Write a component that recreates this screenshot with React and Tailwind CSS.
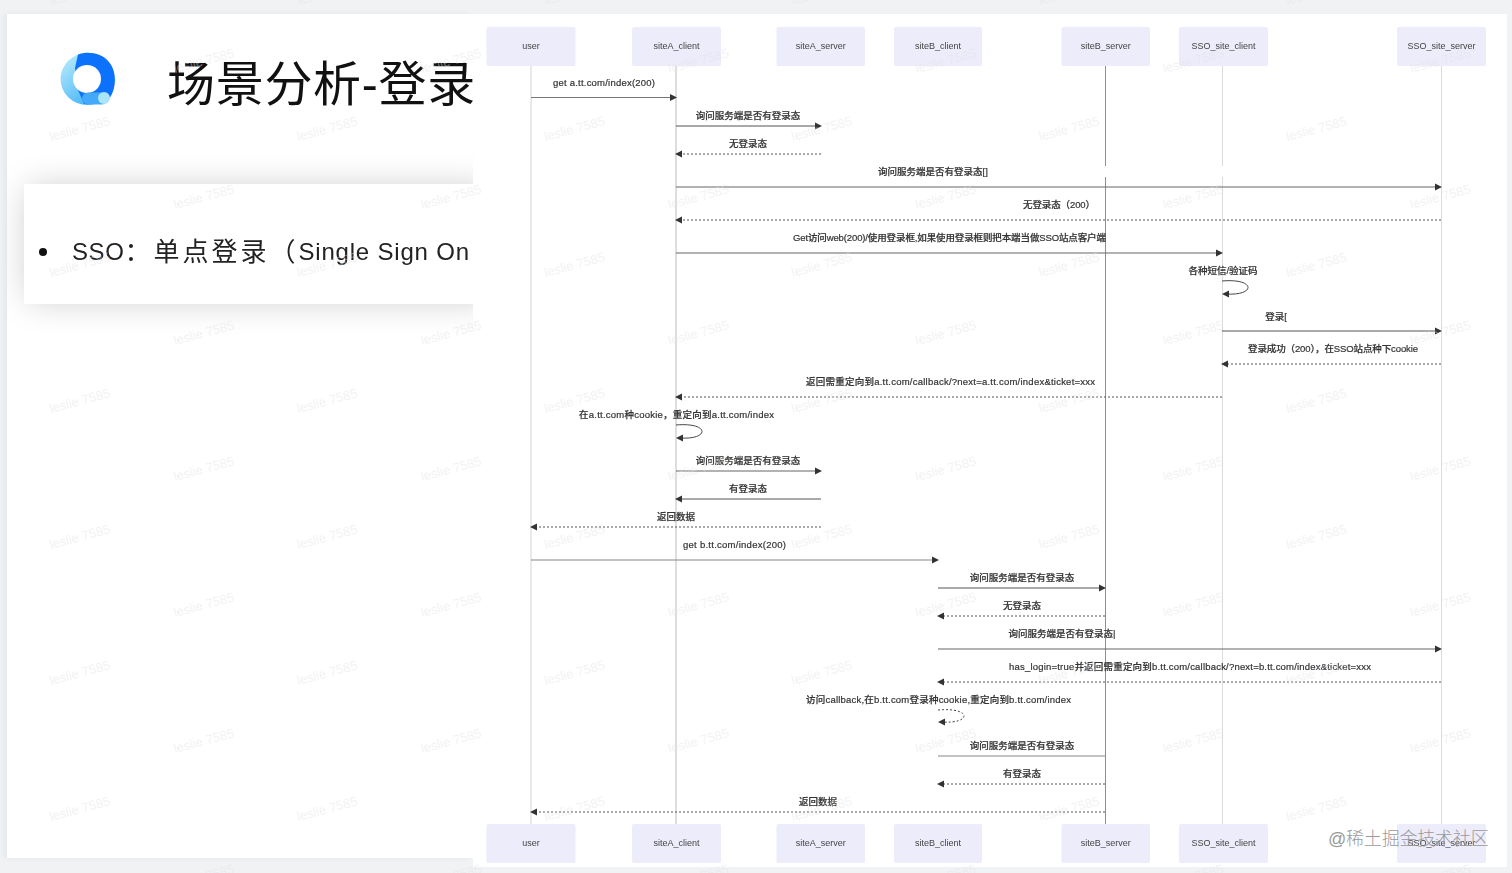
import React from 'react';

const actors = [
  { name: 'user', x: 486.5, w: 89 },
  { name: 'siteA_client', x: 632, w: 89 },
  { name: 'siteA_server', x: 776.5, w: 88.5 },
  { name: 'siteB_client', x: 894, w: 88 },
  { name: 'siteB_server', x: 1061.5, w: 88.5 },
  { name: 'SSO_site_client', x: 1179, w: 89 },
  { name: 'SSO_site_server', x: 1397, w: 89 },
];

const lifelines = [
  { x: 531, color: '#d4d4d4', parts: [[66, 824]] },
  { x: 676, color: '#bdbdbd', parts: [[66, 824]] },
  { x: 1105.5, color: '#8f8f8f', parts: [[66, 166], [177, 824]] },
  { x: 1222.5, color: '#dcdcdc', parts: [[66, 166], [177, 824]] },
  { x: 1441.5, color: '#dcdcdc', parts: [[66, 824]] },
];

const messages = [
  { y: 97.5, from: 531, to: 676, label: 'get a.tt.com/index(200)', lx: 604, ly: 86, w: 102, color: '#777' },
  { y: 126, from: 676, to: 821, label: '询问服务端是否有登录态', lx: 748, ly: 119, color: '#555' },
  { y: 154, from: 821, to: 676, dotted: true, label: '无登录态', lx: 748, ly: 147 },
  { y: 187, from: 676, to: 1441, label: '询问服务端是否有登录态[]', lx: 933, ly: 175, color: '#666' },
  { y: 220, from: 1441, to: 676, dotted: true, label: '无登录态（200）', lx: 1059, ly: 208, w: 72 },
  { y: 253, from: 676, to: 1222, label: 'Get访问web(200)/使用登录框,如果使用登录框则把本端当做SSO站点客户端', lx: 949.5, ly: 241, w: 313, color: '#666' },
  { y: 331, from: 1222, to: 1441, label: '登录[', lx: 1276, ly: 320, color: '#555' },
  { y: 364, from: 1441, to: 1222, dotted: true, label: '登录成功（200），在SSO站点种下cookie', lx: 1333, ly: 352, w: 170 },
  { y: 397, from: 1222, to: 676, dotted: true, label: '返回需重定向到a.tt.com/callback/?next=a.tt.com/index&ticket=xxx', lx: 950.5, ly: 385, w: 289 },
  { y: 471, from: 676, to: 821, label: '询问服务端是否有登录态', lx: 748, ly: 464, color: '#666' },
  { y: 499, from: 821, to: 676, label: '有登录态', lx: 748, ly: 492, color: '#555' },
  { y: 527, from: 821, to: 531, dotted: true, label: '返回数据', lx: 676, ly: 520 },
  { y: 560, from: 531, to: 938, label: 'get b.tt.com/index(200)', lx: 734.5, ly: 548, w: 103, color: '#888' },
  { y: 588, from: 938, to: 1105, label: '询问服务端是否有登录态', lx: 1022, ly: 581, color: '#555' },
  { y: 616, from: 1105, to: 938, dotted: true, label: '无登录态', lx: 1022, ly: 609 },
  { y: 649, from: 938, to: 1441, label: '询问服务端是否有登录态|', lx: 1062, ly: 637, color: '#666' },
  { y: 682, from: 1441, to: 938, dotted: true, label: 'has_login=true并返回需重定向到b.tt.com/callback/?next=b.tt.com/index&ticket=xxx', lx: 1190, ly: 670, w: 362 },
  { y: 756, from: 938, to: 1105, noHead: true, label: '询问服务端是否有登录态', lx: 1022, ly: 749, color: '#888' },
  { y: 784, from: 1105, to: 938, dotted: true, label: '有登录态', lx: 1022, ly: 777 },
  { y: 812, from: 1105, to: 531, dotted: true, label: '返回数据', lx: 818, ly: 805 },
];

const loops = [
  { x: 1222, top: 281, bottom: 294, label: '各种短信/验证码', lx: 1223, ly: 274 },
  { x: 676, top: 425, bottom: 438, label: '在a.tt.com种cookie，重定向到a.tt.com/index', lx: 676.5, ly: 418, w: 195 },
  { x: 938, top: 710, bottom: 722, dotted: true, label: '访问callback,在b.tt.com登录种cookie,重定向到b.tt.com/index', lx: 938.5, ly: 703, w: 265 },
];

// watermark grid: staggered rows, every other row moved right
const marks = [];
for (let row = 0; row < 14; row++) {
  const odd = row % 2 === 1;
  for (let col = 0; col < 7; col++) {
    marks.push({ x: (odd ? 205 : 81) + col * 247.3, y: -3 + row * 68 });
  }
}

function Head({ x, y, dir }) {
  return <polygon points={`${x},${y} ${x - dir * 7},${y - 3.5} ${x - dir * 7},${y + 3.5}`} fill="#333" />;
}

function Label({ x, y, w, children }) {
  return (
    <text x={x} y={y} textAnchor="middle" fontSize="9.5" fontWeight="500" fill="#333" stroke="#333" strokeWidth="0.2" textLength={w}>
      {children}
    </text>
  );
}

function ActorBox({ actor, y }) {
  return (
    <g>
      <rect x={actor.x} y={y} width={actor.w} height={39} rx="2" fill="#ececfb" />
      <text x={actor.x + actor.w / 2} y={y + 22} textAnchor="middle" fontSize="9" fill="#444">{actor.name}</text>
    </g>
  );
}

function Diagram() {
  return (
    <svg
      viewBox="473 14 1034 853"
      className="w-[1034px] h-[853px] blur-[0.5px] font-['Liberation_Sans','Noto_Sans_CJK_SC',sans-serif]"
    >
      {lifelines.map(l =>
        l.parts.map(([a, b]) => (
          <line key={`${l.x}-${a}`} x1={l.x} x2={l.x} y1={a} y2={b} stroke={l.color} strokeWidth="1" />
        ))
      )}
      {actors.map(a => <ActorBox key={a.name} actor={a} y={27} />)}
      {actors.map(a => <ActorBox key={a.name + '-bottom'} actor={a} y={824} />)}

      {messages.map(m => {
        const dir = m.to > m.from ? 1 : -1;
        return (
          <g key={m.y}>
            <line
              x1={m.from}
              x2={m.noHead ? m.to : m.to - dir * 3}
              y1={m.y}
              y2={m.y}
              stroke={m.dotted ? '#555' : m.color}
              strokeWidth={m.dotted ? 1 : 1.2}
              strokeDasharray={m.dotted ? '2 2' : undefined}
            />
            {!m.noHead && <Head x={m.to + dir} y={m.y} dir={dir} />}
            <Label x={m.lx} y={m.ly} w={m.w}>{m.label}</Label>
          </g>
        );
      })}

      {loops.map(l => (
        <g key={l.x}>
          <path
            d={`M${l.x} ${l.top} C${l.x + 34} ${l.top - 3} ${l.x + 34} ${l.bottom + 2} ${l.x + 4} ${l.bottom}`}
            fill="none"
            stroke="#444"
            strokeWidth="1"
            strokeDasharray={l.dotted ? '2 2' : undefined}
          />
          <Head x={l.x} y={l.bottom} dir={-1} />
          <Label x={l.lx} y={l.ly} w={l.w}>{l.label}</Label>
        </g>
      ))}
    </svg>
  );
}

function Logo() {
  return (
    <svg width="56" height="54" viewBox="0 0 56 54" className="shrink-0 mb-[12px]">
      <defs>
        <linearGradient id="crescent" x1="0" y1="0.3" x2="0.6" y2="1">
          <stop offset="0" stopColor="#a9e3fb" />
          <stop offset="1" stopColor="#3fb2f7" />
        </linearGradient>
      </defs>
      <ellipse cx="27.5" cy="27" rx="27" ry="26" fill="url(#crescent)" />
      <path d="M18 2.5C28 -1 42 1 49 10C55 17 56 28 54 36C52 44 48 50 42 52L24 52L18 38L15 16Z" fill="#0d72fb" />
      <circle cx="27" cy="27" r="14" fill="#fff" />
      <rect x="22" y="40.5" width="26" height="12" rx="6" fill="#45a9fb" />
      <circle cx="44" cy="46" r="6" fill="#a9e6f7" />
    </svg>
  );
}

export default function App() {
  return (
    <div className="relative w-[1512px] h-[873px] overflow-hidden bg-[#f1f2f4] font-['Liberation_Sans','Noto_Sans_CJK_SC',sans-serif]">
      <div className="flex pl-[7px] pt-[14px]">
        {/* Left half of the slide */}
        <div className="w-[466px] h-[844px] shrink-0 overflow-hidden bg-white shadow-[-3px_0_6px_rgba(0,0,0,0.05)] blur-[0.3px]">
          <div className="flex items-center h-[170px] pl-[53px] pb-[36px] pt-[8px]">
            <Logo />
            <h1 className="ml-[51px] text-[48px] tracking-[0.7px] leading-none font-normal whitespace-nowrap text-[#111]">场景分析-登录</h1>
          </div>
          <div className="ml-[17px] h-[120px] w-[470px] pt-[16px] flex items-center bg-white shadow-[0_0_32px_-4px_rgba(0,0,0,0.22)] whitespace-nowrap text-[#222]">
            <span className="ml-[15px] w-[8px] h-[8px] rounded-full bg-[#111] shrink-0" />
            <span className="ml-[25px] text-[24px] tracking-[0.6px]">SSO</span>
            <span className="text-[26px] tracking-[3px]">：单点登录（</span>
            <span className="text-[24px] tracking-[0.8px]">Single Sign On</span>
          </div>
        </div>
        {/* Sequence diagram pasted over the right half */}
        <div className="w-[1034px] h-[853px] shrink-0 bg-white">
          <Diagram />
        </div>
      </div>

      <svg className="absolute inset-0 pointer-events-none" width="1512" height="873">
        {marks.map(m => (
          <text
            key={`${m.x}-${m.y}`}
            x={m.x}
            y={m.y}
            textAnchor="middle"
            fontSize="13"
            fill="#e2e2e6"
            fillOpacity="0.45"
            transform={`rotate(-15 ${m.x} ${m.y})`}
          >
            leslie 7585
          </text>
        ))}
      </svg>

      <div className="absolute left-[1328px] top-[827px] text-[18px] leading-6 text-[#9a9a9a] font-light tracking-[-0.2px] whitespace-nowrap">@稀土掘金技术社区</div>
    </div>
  );
}
